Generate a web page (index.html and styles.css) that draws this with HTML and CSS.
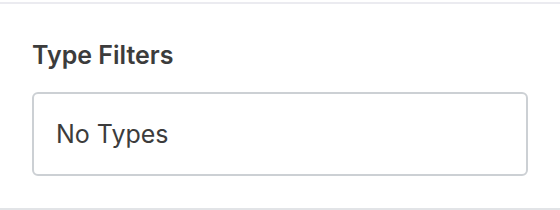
FILE: index.html
```html
<!DOCTYPE html>
<html lang="en">
<head>
    <meta charset="UTF-8">
    <title>Type Filters</title>
    <link rel="stylesheet" href="styles.css">
</head>
<body>
    <div class="panel">
        <div class="panel-title">Type Filters</div>
        <div class="filter-box">
            <span class="filter-empty">No Types</span>
        </div>
    </div>
</body>
</html>
```

FILE: styles.css
```css
* {
    margin: 0;
    padding: 0;
    box-sizing: border-box;
}

body {
    font-family: Inter, 'Liberation Sans', Arial, sans-serif;
    background: #fff;
    color: #3c3c3c;
    width: 560px;
    height: 210px;
    overflow: hidden;
}

.panel {
    margin-top: 2px;
    border-top: 2px solid #ebebf0;
    border-bottom: 2px solid #e2e4e7;
    padding: 35px 32px 32px 32px;
}

.panel-title {
    font-size: 25px;
    font-weight: 600;
    line-height: 32px;
    color: #3c3c3c;
    margin-bottom: 21px;
}

.filter-box {
    border: 2px solid #ccd0d4;
    border-radius: 6px;
    padding: 24px 22px;
    width: 496px;
}

.filter-empty {
    display: block;
    font-size: 25px;
    line-height: 32px;
    color: #3c3c3c;
}
```
